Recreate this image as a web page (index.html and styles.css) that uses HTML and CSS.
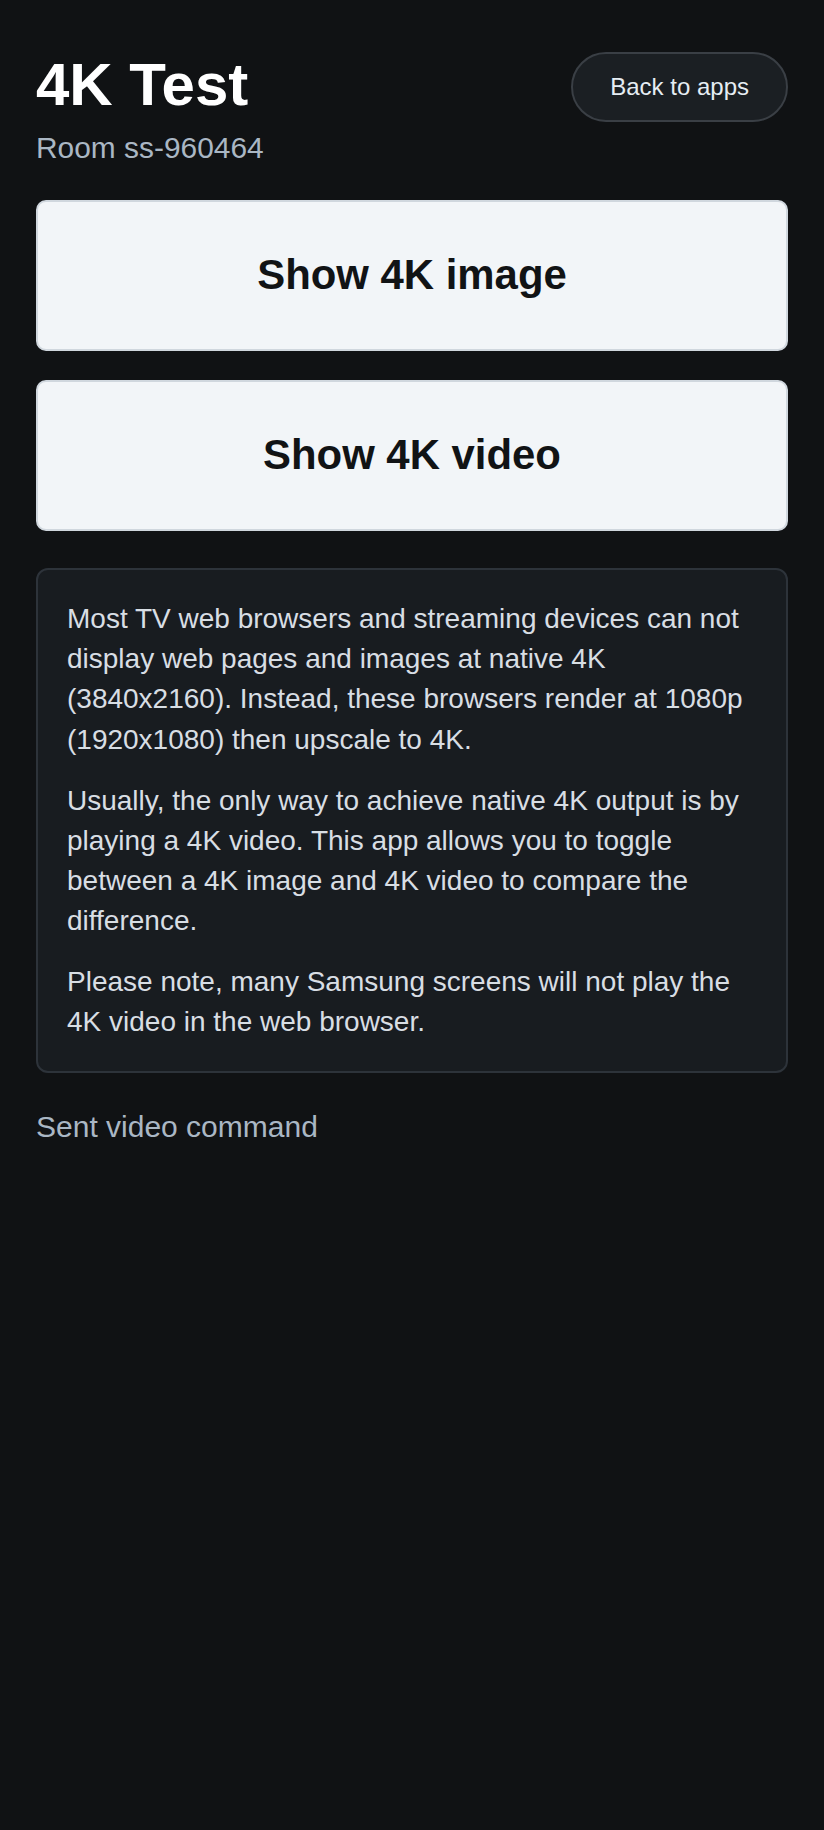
FILE: index.html
```html
<!DOCTYPE html>
<html lang="en">
<head>
<meta charset="utf-8">
<title>4K Test</title>
<link rel="stylesheet" href="styles.css">
</head>
<body>
<main class="page">
  <header class="header">
    <div class="heading">
      <h1 class="title">4K Test</h1>
      <p class="room">Room ss-960464</p>
    </div>
    <button class="back-btn" type="button">Back to apps</button>
  </header>
  <div class="actions">
    <button class="big-btn" type="button">Show 4K image</button>
    <button class="big-btn" type="button">Show 4K video</button>
  </div>
  <section class="info">
    <p>Most TV web browsers and streaming devices can not display web pages and images at native 4K (3840x2160). Instead, these browsers render at 1080p (1920x1080) then upscale to 4K.</p>
    <p>Usually, the only way to achieve native 4K output is by playing a 4K video. This app allows you to toggle between a 4K image and 4K video to compare the difference.</p>
    <p>Please note, many Samsung screens will not play the 4K video in the web browser.</p>
  </section>
  <p class="status">Sent video command</p>
</main>
</body>
</html>
```
FILE: styles.css
```css
html, body {
  margin: 0;
  padding: 0;
  background: #101214;
}
body {
  font-family: "Liberation Sans", Arial, sans-serif;
  color: #e6edf3;
  min-height: 1830px;
}
.page {
  padding: 52px 36px 36px;
  display: flex;
  flex-direction: column;
}
.header {
  display: flex;
  justify-content: space-between;
  align-items: flex-start;
}
.title {
  margin: 0;
  font-size: 60px;
  line-height: 66.7px;
  font-weight: 700;
  color: #ffffff;
}
.room {
  margin: 12px 0 0;
  font-size: 29.9px;
  line-height: 33.1px;
  color: #aab7c4;
}
.back-btn {
  font-family: inherit;
  font-size: 24px;
  line-height: 27.6px;
  white-space: nowrap;
  color: #e6edf3;
  background: #1b1f23;
  border: 2px solid #3a3f45;
  border-radius: 999px;
  padding: 19px 37px;
}
.actions {
  margin-top: 36px;
  display: flex;
  flex-direction: column;
  gap: 29px;
}
.big-btn {
  font-family: inherit;
  font-size: 41.9px;
  line-height: 47.8px;
  font-weight: 700;
  color: #111315;
  background: #f2f5f8;
  border: 2px solid #d0d7de;
  border-radius: 10px;
  padding: 49.6px 20px;
  width: 100%;
}
.info {
  margin-top: 37px;
  background: #181c20;
  border: 2px solid #2d333a;
  border-radius: 12px;
  padding: 29.2px 29px 28.2px;
}
.info p {
  margin: 0 0 20.8px;
  font-size: 28px;
  line-height: 40.2px;
  color: #d8dee4;
}
.info p:last-child {
  margin-bottom: 0;
}
.status {
  margin: 37px 0 0;
  font-size: 30px;
  line-height: 33.4px;
  color: #aab7c4;
}
```
